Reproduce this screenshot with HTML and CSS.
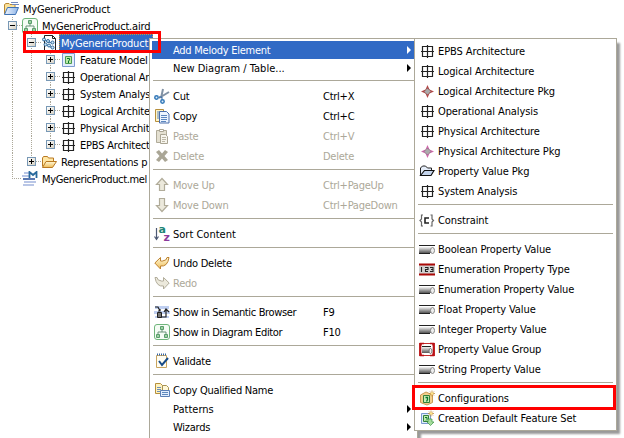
FILE: index.html
```html
<!DOCTYPE html>
<html lang="en">
<head>
<meta charset="utf-8">
<title>MyGenericProduct</title>
<link rel="stylesheet" href="styles.css">
</head>
<body>
<svg class="defs" aria-hidden="true">
  <defs>
    <linearGradient id="gold" x2="0" y2="1"><stop stop-color="#fff8d8"/><stop offset="1" stop-color="#efbd58"/></linearGradient>
    <linearGradient id="steel" x2="0" y2="1"><stop stop-color="#f4f4f4"/><stop offset="1" stop-color="#555"/></linearGradient>
    <linearGradient id="sky" x2="1" y2="0"><stop stop-color="#eef4fd"/><stop offset="1" stop-color="#8fb4e6"/></linearGradient>
  </defs>
  <symbol id="arch" viewBox="0 0 16 16"><path d="M3.500 3.500h10v10h-10zM8.500 2v13M2 8.500h13" fill="#fff" stroke="#222" stroke-width="1.200"/></symbol>
  <symbol id="diagram" viewBox="0 0 16 16"><rect x=".5" y=".5" width="15" height="15" rx="2.500" fill="#f5fcf5" stroke="#6fb57b"/><path d="M8 5v3M4 11V8h8v3" fill="none" stroke="#6b947a"/><path d="M6.500 2.500h3v3h-3zM2.500 10.500h3v3h-3zM10.500 10.500h3v3h-3z" fill="#9bd3a0" stroke="#5a9b6c"/></symbol>
  <symbol id="project" viewBox="0 0 16 16"><path d="M1.500 13V3.500L3 2.500h3l1 1h5v3" fill="#fbe29a" stroke="#ba8834"/><path d="M1.500 13.500l3-7h11l-3 7z" fill="url(#sky)" stroke="#3f73b5"/><path d="M8 1.500h7M9 3.500h7" stroke="#7189bd"/></symbol>
  <symbol id="model" viewBox="0 0 16 16"><path d="M3.500.5h8l3 3v12h-11z" fill="#fff" stroke="#222"/><path d="M11.500.5v3h3" fill="none" stroke="#222"/><path d="M3 5l4 2 4 1M4 9l4 2 3 2" stroke="#4a7bab"/><g fill="#cde5f6" stroke="#316b9d"><circle cx="3" cy="4.500" r="1.500"/><circle cx="7" cy="6" r="1.500"/><circle cx="11.500" cy="7.500" r="1.500"/><circle cx="4.500" cy="9.500" r="1.500"/><circle cx="8" cy="10.500" r="1.500"/><circle cx="11.500" cy="12.500" r="1.500"/></g></symbol>
  <symbol id="feature" viewBox="0 0 16 16"><path d="M2.500 1.500h12v13h-12z" fill="#e2edfc" stroke="#7d9bd0"/><path d="M5.500 4.500h6v7h-6z" fill="#bce9a6" stroke="#4c9a50"/><path d="M7 6.500h2.500v1.500L8.500 9v2" fill="none" stroke="#08752e"/></symbol>
  <symbol id="folder" viewBox="0 0 16 16"><path d="M1.500 12.500V4l1-1.500h4l1 1.500h5v3" fill="#ffe7a5" stroke="#b97922"/><path d="M1.500 13.500l3.500-6h10.500l-4 6z" fill="url(#gold)" stroke="#b97922"/></symbol>
  <symbol id="melody" viewBox="0 0 16 16"><path d="M2 2h6M0 5h8M2 11h12M1 14h11" stroke="#b9c6e6" stroke-width="2"/><path d="M1 8h12" stroke="#5a77b0" stroke-width="2"/><path d="M7.500 7V1L11 4l3.500-3v6" fill="none" stroke="#28699c" stroke-width="1.800"/></symbol>
  <symbol id="cut" viewBox="0 0 16 16"><path d="M9 1L7 10M15 4L5 10" stroke="#8292a5" stroke-width="2"/><path d="M5 9h3v3" fill="none" stroke="#396da6"/><g fill="#dcecfb" stroke="#3479b8" stroke-width="1.500"><circle cx="2.500" cy="9.500" r="1.700"/><circle cx="8.500" cy="13.500" r="1.700"/></g></symbol>
  <symbol id="copy" viewBox="0 0 16 16"><path d="M1.500 1.500h8v12h-8z" fill="#fff5c9" stroke="#b68f3d"/><path d="M3 4h3M3 6h3M3 8h3M3 10h3" stroke="#5984c0"/><path d="M5.500 3.500h7l2.500 2.500v9H5.500z" fill="#edf5ff" stroke="#4a6eac"/><path d="M7 7.500h6M7 9.500h6M7 11.500h6M7 13.500h5" stroke="#5c86be"/></symbol>
  <symbol id="paste" viewBox="0 0 16 16"><path d="M2.500 2.500h10v12h-10z" fill="#e4e0d1" stroke="#b0ab99"/><path d="M5.500 1.500h4v2h-4z" fill="#fff" stroke="#aaa594"/><path d="M6.500 6.500h5l2 2v7h-7z" fill="#f7f5ed" stroke="#aaa594"/><path d="M8 9.500h4M8 11.500h4M8 13.500h3" stroke="#bcb7a6"/></symbol>
  <symbol id="delete" viewBox="0 0 16 16"><path d="M2 4l3-2 3 3.500L11 2l3 2-3.500 4 3.500 4-3 2-3-3.500L5 14l-3-2 3.500-4z" fill="#aaa696"/></symbol>
  <symbol id="up" viewBox="0 0 16 16"><path d="M8 1.500l5.500 6h-3v6h-5v-6h-3z" fill="#ece9dc" stroke="#b1ac9a" stroke-width="1.200"/></symbol>
  <symbol id="down" viewBox="0 0 16 16"><path d="M8 14.500l5.500-6h-3v-7h-5v7h-3z" fill="#ece9dc" stroke="#b1ac9a" stroke-width="1.200"/></symbol>
  <symbol id="undo" viewBox="0 0 16 16"><path d="M6.500 2.500L.8 8l5.700 6v-3q7 1 8.500-8.500h-2Q12 6 10 5.500q-2 1-3.500.5z" fill="url(#gold)" stroke="#bd822f"/></symbol>
  <symbol id="redo" viewBox="0 0 16 16"><path d="M9.500 2.500L15.200 8l-5.700 6v-3Q2.500 12 1 2.500h2Q4 6 6 5.500q2 1 3.500.5z" fill="#ece9dc" stroke="#b1ac9a"/></symbol>
  <symbol id="sort" viewBox="0 0 16 16"><path d="M2.500 2v11M.5 10.500l2 3 2-3" fill="none" stroke="#4c5873" stroke-width="1.200"/><text x="4.500" y="7" class="glyph glyph-a">a</text><text x="9.500" y="15" class="glyph glyph-z">z</text></symbol>
  <symbol id="semantic" viewBox="0 0 16 16"><path d="M1 2h14v3H1zM0 7h16v3H0zM1 12h14v2H1z" fill="#bfcff1"/><path d="M1 3h3l2 4M4 7h2V5M10 13h2V6M10 8l2-3 3 3M6 13h4" fill="none" stroke="#222" stroke-width="1.200"/><path d="M3.500 8.500h4v5h-4z" fill="#777" stroke="#222"/></symbol>
  <symbol id="validate" viewBox="0 0 16 16"><path d="M2.500 2.500h10v12h-10z" fill="#fffdf2" stroke="#c9a45e"/><path d="M3 1.500h10" stroke="#3665a2" stroke-width="2" stroke-dasharray="1 1"/><path d="M5 8l3 4 6-7" fill="none" stroke="#174b88" stroke-width="2"/></symbol>
  <symbol id="qualified" viewBox="0 0 16 16"><path d="M1.500 1.500h5l2 2v8h-7z" fill="#fff2bd" stroke="#b6903c"/><path d="M3 5.500h4M3 7.500h4M3 9.500h3" stroke="#6d8eb9"/><path d="M8.500 3.500h4l2 2v4h-6z" fill="#fff8d8" stroke="#a89354"/><path d="M6.500 8.500h9v6h-9z" fill="#e2eeff" stroke="#5a7fb7"/><path d="M8 10.500h6M8 12.500h6" stroke="#5f89bd"/></symbol>
  <symbol id="lpkg" viewBox="0 0 16 16"><path d="M8.500 2l2 4.500L15 8.500l-4.500 2-2 4.500-2-4.500L2 8.500l4.500-2z" fill="#b44a4a"/><path d="M8.500 5L12 8.500 8.500 12 5 8.500z" fill="#aaa" stroke="#8b3c3c" stroke-dasharray="1 1"/></symbol>
  <symbol id="ppkg" viewBox="0 0 16 16"><path d="M8.500 2l2 4.500L15 8.500l-4.500 2-2 4.500-2-4.500L2 8.500l4.500-2z" fill="#cf69ab"/><path d="M8.500 5L12 8.500 8.500 12 5 8.500z" fill="#ababab" stroke="#8e6580" stroke-dasharray="1 1"/></symbol>
  <symbol id="openfolder" viewBox="0 0 16 16"><path d="M1.500 13V5l2-2h3l2 2h4v2.500" fill="#e5edf9" stroke="#222"/><path d="M1.500 12.500l4-5h9.500l-3 5z" fill="#c4d4ec" stroke="#111" stroke-width="1.200"/></symbol>
  <symbol id="constraint" viewBox="0 0 16 16"><path d="M4 3H2.500v4L1 8.500 2.500 10v4H4M11.500 3h1.500v4l1.500 1.500L13 10v4h-1.500" fill="none" stroke="#666" stroke-width="1.200"/><path d="M10 6H6v5h4" fill="none" stroke="#222" stroke-width="1.600"/></symbol>
  <symbol id="value" viewBox="0 0 16 16"><path d="M0 4.500h16" stroke="#222"/><path d="M0 6h12v6H0z" fill="url(#steel)"/><path d="M0 12.500h11" stroke="#222"/><ellipse cx="13.500" cy="9.500" rx="2" ry="3" fill="#eee" stroke="#888"/></symbol>
  <symbol id="enum" viewBox="0 0 16 16"><path d="M0 3h16v11H0z" fill="#d0d0d0"/><path d="M0 3.500h16M0 13.500h16" stroke="#aa0907" stroke-width="2"/><path d="M2.500 6v5M6 6.500h3v2H6.500v2H9M11 6.500h3v4h-3M12 8.500h2" fill="none" stroke="#222" stroke-width="1.100"/></symbol>
  <symbol id="group" viewBox="0 0 16 16"><path d="M0 2h16v13H0z" fill="#c52b2b"/><path d="M3 3h10l2 5-2 6H3L1 8z" fill="#fff"/><path d="M5 2.500H1.500v12H5M11 2.500h3.500v12H11" fill="none" stroke="#b91117" stroke-width="1.600"/><path d="M3 6h9v6H3z" fill="url(#steel)"/><path d="M3 5.500h9" stroke="#222"/><ellipse cx="11.500" cy="10" rx="1.500" ry="2.500" fill="#eee" stroke="#777"/></symbol>
  <symbol id="config" viewBox="0 0 16 16"><path d="M1.500 5L7 2l6.500 3v7.500L8 15l-6.500-2.500z" fill="#f2d08d" stroke="#c99a55"/><path d="M4.500 5.500h6v7h-6z" fill="#c7ecb3" stroke="#338039"/><path d="M6.500 7.500h2v2l-1 2" fill="none" stroke="#08752e" stroke-width="1.300"/><path d="M13 .5v6M10 3.500h6M11 1.500l4 4M15 1.500l-4 4" stroke="#c08a35" stroke-width=".8"/><circle cx="13" cy="3.500" r="1.300" fill="#ffe58c"/></symbol>
  <symbol id="creation" viewBox="0 0 16 16"><path d="M2.500 3.500h9v10h-9z" fill="#dceafb" stroke="#7a9ace"/><path d="M4.500 5.500h5v6h-5z" fill="#bfe9aa" stroke="#338039"/><path d="M6 7.500h2v2l-1 1" fill="none" stroke="#08752e"/><path d="M9 9h4v3h2l-3.500 3.500L8 12h1z" fill="#a6dc9c" stroke="#3c9645" stroke-width=".7"/><path d="M12 .5v6M9 3.500h6M10 1.500l4 4M14 1.500l-4 4" stroke="#c08a35" stroke-width=".8"/><circle cx="12" cy="3.500" r="1.300" fill="#ffe58c"/></symbol>
</svg>

<main class="screen">
  <ul class="tree">
    <li class="node"><svg class="icon"><use href="#project"/></svg><span class="label">MyGenericProduct</span></li>
    <li class="node"><i class="guide"></i><b class="box minus"></b><svg class="icon"><use href="#diagram"/></svg><span class="label">MyGenericProduct.aird</span></li>
    <li class="node"><i class="guide"></i><i class="guide"></i><b class="box minus"></b><svg class="icon"><use href="#model"/></svg><span class="label selected">MyGenericProduct</span></li>
    <li class="node"><i class="guide"></i><i class="guide"></i><i class="guide"></i><b class="box"></b><svg class="icon"><use href="#feature"/></svg><span class="label">Feature Model</span></li>
    <li class="node"><i class="guide"></i><i class="guide"></i><i class="guide"></i><b class="box"></b><svg class="icon"><use href="#arch"/></svg><span class="label">Operational An</span></li>
    <li class="node"><i class="guide"></i><i class="guide"></i><i class="guide"></i><b class="box"></b><svg class="icon"><use href="#arch"/></svg><span class="label">System Analys</span></li>
    <li class="node"><i class="guide"></i><i class="guide"></i><i class="guide"></i><b class="box"></b><svg class="icon"><use href="#arch"/></svg><span class="label">Logical Archite</span></li>
    <li class="node"><i class="guide"></i><i class="guide"></i><i class="guide"></i><b class="box"></b><svg class="icon"><use href="#arch"/></svg><span class="label">Physical Archit</span></li>
    <li class="node"><i class="guide"></i><i class="guide"></i><i class="guide end"></i><b class="box"></b><svg class="icon"><use href="#arch"/></svg><span class="label">EPBS Architect</span></li>
    <li class="node"><i class="guide"></i><i class="guide end"></i><b class="box"></b><svg class="icon"><use href="#folder"/></svg><span class="label">Representations p</span></li>
    <li class="node"><i class="guide end"></i><b class="box leaf"></b><svg class="icon"><use href="#melody"/></svg><span class="label tight">MyGenericProduct.mel</span></li>
  </ul>

  <div class="menu main">
    <div class="item short active"><i></i><span>Add Melody Element</span><i class="arrow"></i></div>
    <div class="item short"><i></i><span class="loose">New Diagram / Table...</span><i class="arrow"></i></div>
    <hr>
    <div class="item"><svg class="icon"><use href="#cut"/></svg><span>Cut</span><span>Ctrl+X</span></div>
    <div class="item"><svg class="icon"><use href="#copy"/></svg><span>Copy</span><span>Ctrl+C</span></div>
    <div class="item off"><svg class="icon"><use href="#paste"/></svg><span>Paste</span><span>Ctrl+V</span></div>
    <div class="item off"><svg class="icon"><use href="#delete"/></svg><span>Delete</span><span>Delete</span></div>
    <hr>
    <div class="item off"><svg class="icon"><use href="#up"/></svg><span>Move Up</span><span>Ctrl+PageUp</span></div>
    <div class="item off"><svg class="icon"><use href="#down"/></svg><span>Move Down</span><span>Ctrl+PageDown</span></div>
    <hr>
    <div class="item"><svg class="icon"><use href="#sort"/></svg><span class="loose">Sort Content</span></div>
    <hr>
    <div class="item"><svg class="icon"><use href="#undo"/></svg><span>Undo Delete</span></div>
    <div class="item off"><svg class="icon"><use href="#redo"/></svg><span>Redo</span></div>
    <hr>
    <div class="item"><svg class="icon"><use href="#semantic"/></svg><span class="tight">Show in Semantic Browser</span><span>F9</span></div>
    <div class="item"><svg class="icon"><use href="#diagram"/></svg><span class="tight">Show in Diagram Editor</span><span>F10</span></div>
    <hr>
    <div class="item"><svg class="icon"><use href="#validate"/></svg><span>Validate</span></div>
    <hr>
    <div class="item"><svg class="icon"><use href="#qualified"/></svg><span>Copy Qualified Name</span></div>
    <div class="item short"><i></i><span class="loose">Patterns</span><i class="arrow"></i></div>
    <div class="item short"><i></i><span>Wizards</span><i class="arrow"></i></div>
  </div>

  <div class="menu sub">
    <div class="item"><svg class="icon"><use href="#arch"/></svg><span>EPBS Architecture</span></div>
    <div class="item"><svg class="icon"><use href="#arch"/></svg><span>Logical Architecture</span></div>
    <div class="item"><svg class="icon"><use href="#lpkg"/></svg><span>Logical Architecture Pkg</span></div>
    <div class="item"><svg class="icon"><use href="#arch"/></svg><span>Operational Analysis</span></div>
    <div class="item"><svg class="icon"><use href="#arch"/></svg><span>Physical Architecture</span></div>
    <div class="item"><svg class="icon"><use href="#ppkg"/></svg><span>Physical Architecture Pkg</span></div>
    <div class="item"><svg class="icon"><use href="#openfolder"/></svg><span>Property Value Pkg</span></div>
    <div class="item"><svg class="icon"><use href="#arch"/></svg><span>System Analysis</span></div>
    <hr>
    <div class="item"><svg class="icon"><use href="#constraint"/></svg><span>Constraint</span></div>
    <hr>
    <div class="item"><svg class="icon"><use href="#value"/></svg><span>Boolean Property Value</span></div>
    <div class="item"><svg class="icon"><use href="#enum"/></svg><span>Enumeration Property Type</span></div>
    <div class="item"><svg class="icon"><use href="#value"/></svg><span>Enumeration Property Value</span></div>
    <div class="item"><svg class="icon"><use href="#value"/></svg><span>Float Property Value</span></div>
    <div class="item"><svg class="icon"><use href="#value"/></svg><span>Integer Property Value</span></div>
    <div class="item"><svg class="icon"><use href="#group"/></svg><span>Property Value Group</span></div>
    <div class="item"><svg class="icon"><use href="#value"/></svg><span>String Property Value</span></div>
    <hr>
    <div class="item"><svg class="icon"><use href="#config"/></svg><span>Configurations</span></div>
    <div class="item"><svg class="icon"><use href="#creation"/></svg><span>Creation Default Feature Set</span></div>
  </div>
  <div class="mark mark-node"></div>
  <div class="mark mark-item"></div>
</main>
</body>
</html>
```
FILE: styles.css
```css
* { box-sizing: border-box; }
body {
  margin: 0;
  background: #fff;
  color: #000;
  font: 11px/16px "DejaVu Sans Condensed", "DejaVu Sans", sans-serif;
  font-stretch: condensed;
  letter-spacing: -0.1px;
  white-space: nowrap;
}
.defs { position: absolute; width: 0; height: 0; }
.screen { position: relative; width: 624px; height: 438px; overflow: hidden; }
.icon { width: 16px; height: 16px; flex: none; display: block; }
.glyph { font: bold 11px "DejaVu Sans", sans-serif; }
.glyph-a { fill: #1d8576; }
.glyph-z { fill: #8b3a9c; }

.tree { list-style: none; margin: 0; padding: 0 0 0 3px; width: 160px; letter-spacing: -0.2px; }
.node { display: flex; align-items: center; height: 17px; }
.label { padding: 1px 5px 0 2px; margin-left: 2px; height: 17px; line-height: 17px; }
.selected { background: #316ac5; color: #fff; outline: 1px dotted #ce953a; outline-offset: -1px; }
.guide {
  width: 19px; height: 17px; flex: none; margin-right: -19px;
  background: repeating-linear-gradient(#aca899 0 1px, transparent 1px 2px) 9px 0 / 1px 100% no-repeat;
}
.guide + .guide { margin-left: 19px; }
.guide.end { background-size: 1px 9px; }
.box {
  width: 19px; height: 17px; flex: none;
  background:
    linear-gradient(#000, #000) 7px 8px / 5px 1px no-repeat,
    linear-gradient(#000, #000) 9px 6px / 1px 5px no-repeat,
    linear-gradient(135deg, #fff, #d5d0c2) 6px 5px / 7px 7px no-repeat,
    linear-gradient(#7898b5, #7898b5) 5px 4px / 9px 9px no-repeat,
    repeating-linear-gradient(90deg, #aca899 0 1px, transparent 1px 2px) 14px 8px / 5px 1px no-repeat;
}
.minus {
  background:
    linear-gradient(#000, #000) 7px 8px / 5px 1px no-repeat,
    linear-gradient(135deg, #fff, #d5d0c2) 6px 5px / 7px 7px no-repeat,
    linear-gradient(#7898b5, #7898b5) 5px 4px / 9px 9px no-repeat,
    repeating-linear-gradient(90deg, #aca899 0 1px, transparent 1px 2px) 14px 8px / 5px 1px no-repeat;
}
.leaf { background: repeating-linear-gradient(90deg, #aca899 0 1px, transparent 1px 2px) 9px 8px / 10px 1px no-repeat; }

.menu {
  position: absolute; top: 38px;
  background: #fff; border: 1px solid #aca899; padding: 2px;
  box-shadow: 4px 4px 2px -1px #999;
}
.main { left: 149px; width: 269px; height: 410px; letter-spacing: -0.25px; }
.sub { left: 414px; width: 203px; height: 393px; }
.item {
  display: grid; grid-template-columns: 16px 1fr;
  column-gap: 3px; align-items: center;
  height: 20px; padding-left: 2px;
}
.main .item { grid-template-columns: 16px 147px 1fr; }
.item span { padding-top: 2px; }
.short { height: 18px; }
.tight { letter-spacing: -0.35px; }
.loose { letter-spacing: 0; }
.active { background: #316ac5; color: #fff; }
.off { color: #aca899; }
.menu hr { height: 9px; margin: 0 1px; border: 0; background: linear-gradient(#aca899, #aca899) 0 3px / 100% 1px no-repeat; }
.arrow {
  margin-left: 84px; width: 0; height: 0;
  border: 4px solid transparent; border-left-color: currentColor; border-right: 0;
}
.mark { position: absolute; border: 3px solid #f00; }
.mark-node { left: 23px; top: 31px; width: 138px; height: 22px; }
.mark-item { left: 412px; top: 385px; width: 204px; height: 25px; }
```
